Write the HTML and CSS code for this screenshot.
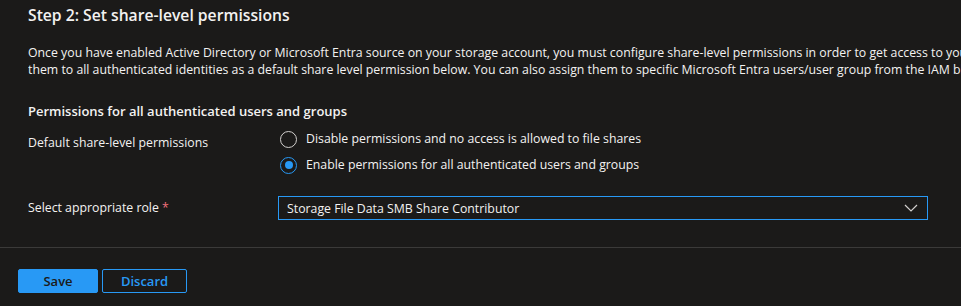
FILE: index.html
```html
<!DOCTYPE html>
<html>
<head>
<meta charset="utf-8">
<link rel="stylesheet" href="styles.css">
</head>
<body>
<div class="page">
  <div class="content">
    <h2 class="title">Step 2: Set share-level permissions</h2>
    <p class="desc">Once you have enabled Active Directory or Microsoft Entra source on your storage account, you must configure share-level permissions in order to get access to your file shares. You can assign them to all authenticated identities as a default share level permission below. You can also assign them to specific Microsoft Entra users/user group from the IAM blade.</p>
    <h3 class="subtitle">Permissions for all authenticated users and groups</h3>
    <div class="row">
      <div class="label">Default share-level permissions</div>
      <div class="radios">
        <label class="radio"><span class="circle"></span><span>Disable permissions and no access is allowed to file shares</span></label>
        <label class="radio"><span class="circle checked"></span><span>Enable permissions for all authenticated users and groups</span></label>
      </div>
    </div>
    <div class="row role">
      <div class="label">Select appropriate role <span class="req">*</span></div>
      <div class="select">
        <span>Storage File Data SMB Share Contributor</span>
        <svg class="chev" width="14" height="8" viewBox="0 0 14 8"><path d="M1 1 L7 7 L13 1" fill="none" stroke="#d2d0ce" stroke-width="1.2"/></svg>
      </div>
    </div>
  </div>
  <div class="footer">
    <button class="btn primary">Save</button>
    <button class="btn secondary">Discard</button>
  </div>
</div>
</body>
</html>
```
FILE: styles.css
```css
html, body {
  margin: 0;
  padding: 0;
  background: #1b1a19;
  overflow: hidden;
}
.page {
  width: 961px;
  height: 306px;
  font-family: "Open Sans", "Noto Sans", sans-serif;
  color: #f3f2f1;
  font-size: 12.3px;
  overflow: hidden;
}
.content {
  padding: 0 0 0 28px;
  height: 248px;
  border-bottom: 1px solid #3b3a39;
  box-sizing: border-box;
}
.title {
  margin: 0;
  padding-top: 4px;
  font-size: 15.7px;
  font-weight: 600;
  line-height: 22px;
  white-space: nowrap;
}
.desc {
  margin: 18px 0 0 0;
  line-height: 17px;
  height: 34px;
  overflow: hidden;
  width: 1100px;
}
.subtitle {
  margin: 24px 0 0 0;
  font-size: 13px;
  font-weight: 600;
  line-height: 18px;
}
.row {
  display: flex;
  margin-top: 9px;
}
.label {
  width: 250px;
  flex: none;
  line-height: 20px;
  padding-top: 4px;
}
.req { color: #f1707b; }
.radios {
  display: flex;
  flex-direction: column;
  gap: 6px;
}
.radio {
  display: flex;
  align-items: center;
  gap: 9px;
  line-height: 20px;
  padding-left: 2px;
}
.circle {
  width: 17px;
  height: 17px;
  box-sizing: border-box;
  border: 1px solid #d2d0ce;
  border-radius: 50%;
  position: relative;
}
.circle.checked {
  border-color: #2899f5;
}
.circle.checked::after {
  content: "";
  position: absolute;
  left: 3.5px;
  top: 3.5px;
  width: 8px;
  height: 8px;
  border-radius: 50%;
  background: #2899f5;
}
.role {
  margin-top: 21px;
}
.role .label { padding-top: 2px; }
.select {
  width: 650px;
  height: 24px;
  box-sizing: border-box;
  border: 1px solid #2899f5;
  display: flex;
  align-items: center;
  justify-content: space-between;
  padding: 0 9px 0 8px;
}
.footer {
  display: flex;
  gap: 4px;
  padding: 21px 0 0 18px;
}
.btn {
  font-family: inherit;
  font-size: 13px;
  font-weight: 600;
  height: 24px;
  box-sizing: border-box;
  border-radius: 2px;
  padding: 0;
  line-height: 20px;
}
.primary {
  width: 80px;
  background: #2899f5;
  border: 1px solid #2899f5;
  color: #1b1a19;
}
.secondary {
  width: 85px;
  background: transparent;
  border: 1px solid #2899f5;
  color: #2899f5;
}
```
